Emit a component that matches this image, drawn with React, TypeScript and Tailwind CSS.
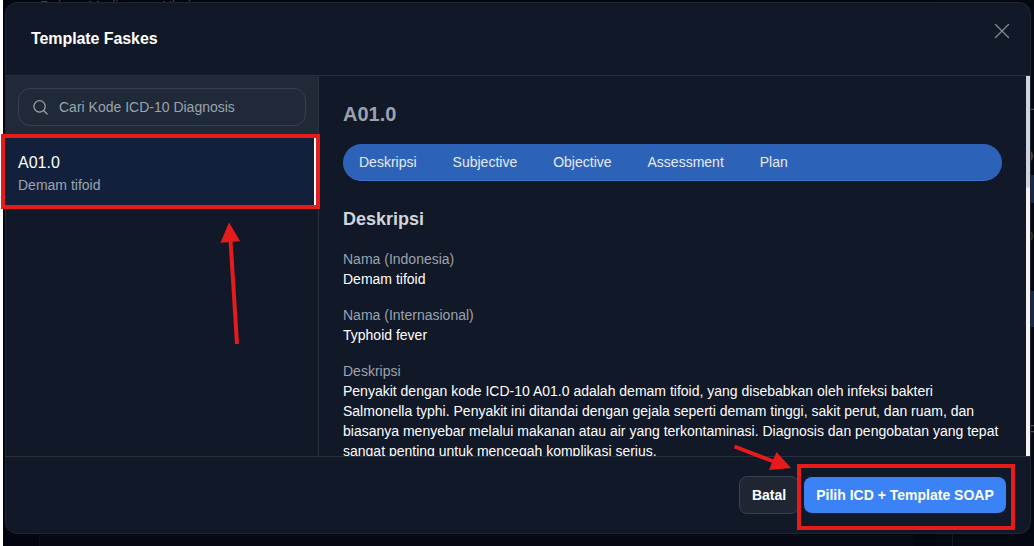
import React from 'react';
import { X } from 'lucide-react';

const tabs = ['Deskripsi', 'Subjective', 'Objective', 'Assessment', 'Plan'];

const details = [
  { label: 'Nama (Indonesia)', value: 'Demam tifoid' },
  { label: 'Nama (Internasional)', value: 'Typhoid fever' },
  {
    label: 'Deskripsi',
    value:
      'Penyakit dengan kode ICD-10 A01.0 adalah demam tifoid, yang disebabkan oleh infeksi bakteri Salmonella typhi. Penyakit ini ditandai dengan gejala seperti demam tinggi, sakit perut, dan ruam, dan biasanya menyebar melalui makanan atau air yang terkontaminasi. Diagnosis dan pengobatan yang tepat sangat penting untuk mencegah komplikasi serius.',
  },
];

// Dimmed page that shows around the edges of the dialog
function Backdrop() {
  return (
    <div className="absolute inset-0 overflow-hidden bg-[#03050f]">
      <div className="absolute left-[37px] -top-px flex text-sm leading-none text-[#3e414a]">
        <span className="w-[102px]">Rekam Medis</span>
        <span className="w-[20px]">&rsaquo;</span>
        <span>Ubah</span>
      </div>
      <div className="absolute left-[36px] top-[535px] h-[11px] w-[875px] border-t border-l border-[#0b0e18] bg-[#060913]" />
      <div className="absolute left-[933px] top-0 h-full w-[98px] bg-[#050810]" />
      <div className="absolute left-[949px] top-[520px] h-[26px] w-[82px] border-l border-[#141821]" />
      <span className="absolute left-[1023px] top-[97px] text-base leading-none text-[#4b4e55]">L</span>
      <span className="absolute left-[1018px] top-[149px] text-base leading-none text-[#4b4e55]">O</span>
      <div className="absolute left-[1025px] top-[175px] h-[28px] w-[6px] bg-[#142850]" />
      <span className="absolute left-[1019px] top-[229px] text-base leading-none text-[#34373e]">D</span>
      <div className="absolute left-[1025px] top-[291px] h-[36px] w-[6px] bg-[#142850]" />
      <span className="absolute left-[1025px] top-[424px] text-base leading-none text-[#4b4e55]">R</span>
    </div>
  );
}

function Annotations() {
  return (
    <>
      <div className="absolute left-[1px] top-[134px] h-[75px] w-[319px] border-4 border-[#e81b1b]" />
      <div className="absolute left-[797px] top-[464px] h-[66px] w-[218px] border-4 border-[#e81b1b]" />
      <svg className="absolute inset-0" width="1034" height="546" fill="#e81b1b" stroke="#e81b1b">
        <path d="M237 344 L230.5 240" strokeWidth="4" />
        <path d="M229 222.5 L220.5 242.7 L240.2 241.2 Z" stroke="none" />
        <path d="M734.5 446.5 L775 462" strokeWidth="4" />
        <path d="M791 468 L776.5 452 L769 470 Z" stroke="none" />
      </svg>
    </>
  );
}

export default function App() {
  return (
    <div className="relative h-[546px] w-[1034px] overflow-hidden bg-white pl-[3px] font-['Liberation_Sans',Arial,sans-serif] text-white">
      <div className="relative h-full pl-[2px] pt-[2px]">
        <Backdrop />

        <div className="relative flex h-[532px] w-[1026px] flex-col overflow-hidden rounded-xl border border-[#1f2632] bg-[#111827]">
          <header className="flex h-[73px] shrink-0 items-start justify-between border-b border-[#2a313e] pl-[25px] pr-[15px]">
            <h2 className="mt-6 text-base font-bold tracking-[-0.005em]">Template Faskes</h2>
            <button className="mt-[15px]">
              <X size={26} strokeWidth={1.2} className="text-[#858a94]" />
            </button>
          </header>

          <div className="flex h-[380px] shrink-0">
            <aside className="w-[313px] shrink-0 border-r border-[#2a313e]">
              <div className="h-[61px] bg-[#1f2937] px-3 pt-3">
                <div className="flex h-[38px] items-center gap-[10px] rounded-xl border border-[#374151] pl-[13px]">
                  <svg width="17" height="17" viewBox="0 0 18 18" fill="none" stroke="#9ca3af" strokeWidth="1.3" strokeLinecap="round">
                    <circle cx="8" cy="7.8" r="6" />
                    <path d="M12.3 12.2 L16 15.9" />
                  </svg>
                  <span className="text-sm text-[#9ca3af]">Cari Kode ICD-10 Diagnosis</span>
                </div>
              </div>
              <div className="h-[70px] border-r-4 border-white bg-[#13203b] pl-3 pt-[14px]">
                <p className="text-base">A01.0</p>
                <p className="text-sm text-[#9ca3af]">Demam tifoid</p>
              </div>
            </aside>

            <main className="min-w-0 flex-1 overflow-hidden pl-6 pr-6 pt-6">
              <h3 className="text-xl leading-7 font-bold text-[#9ca3af]">A01.0</h3>
              <nav className="mt-4 flex h-[37px] w-[659px] items-center gap-9 rounded-full border-b border-[#3b72cb] bg-[#2d62b9] px-4 text-sm text-[#e5ebf5]">
                {tabs.map((tab) => (
                  <span key={tab}>{tab}</span>
                ))}
              </nav>
              <h4 className="mt-6 text-lg leading-7 font-bold text-[#d1d5db]">Deskripsi</h4>
              <dl className="mt-4 flex flex-col gap-4 text-sm leading-5">
                {details.map((item) => (
                  <div key={item.label}>
                    <dt className="text-[#9ca3af]">{item.label}</dt>
                    <dd>{item.value}</dd>
                  </div>
                ))}
              </dl>
            </main>

            <div className="w-1 shrink-0 bg-[#f5f3f1]">
              <div className="h-[112px] rounded-b-sm bg-[#d1d5e0]" />
            </div>
          </div>

          <footer className="flex flex-1 items-start justify-end border-t border-[#2a313e] pr-6 pt-[19px] text-sm font-bold">
            <button className="h-[38px] w-[60px] rounded-lg border border-[#374151] bg-[#1f2632]">Batal</button>
            <button className="ml-[5px] mt-px h-[36px] w-[202px] rounded-lg bg-[#3b82f6]">
              Pilih ICD + Template SOAP
            </button>
          </footer>
        </div>
      </div>

      <Annotations />
    </div>
  );
}
